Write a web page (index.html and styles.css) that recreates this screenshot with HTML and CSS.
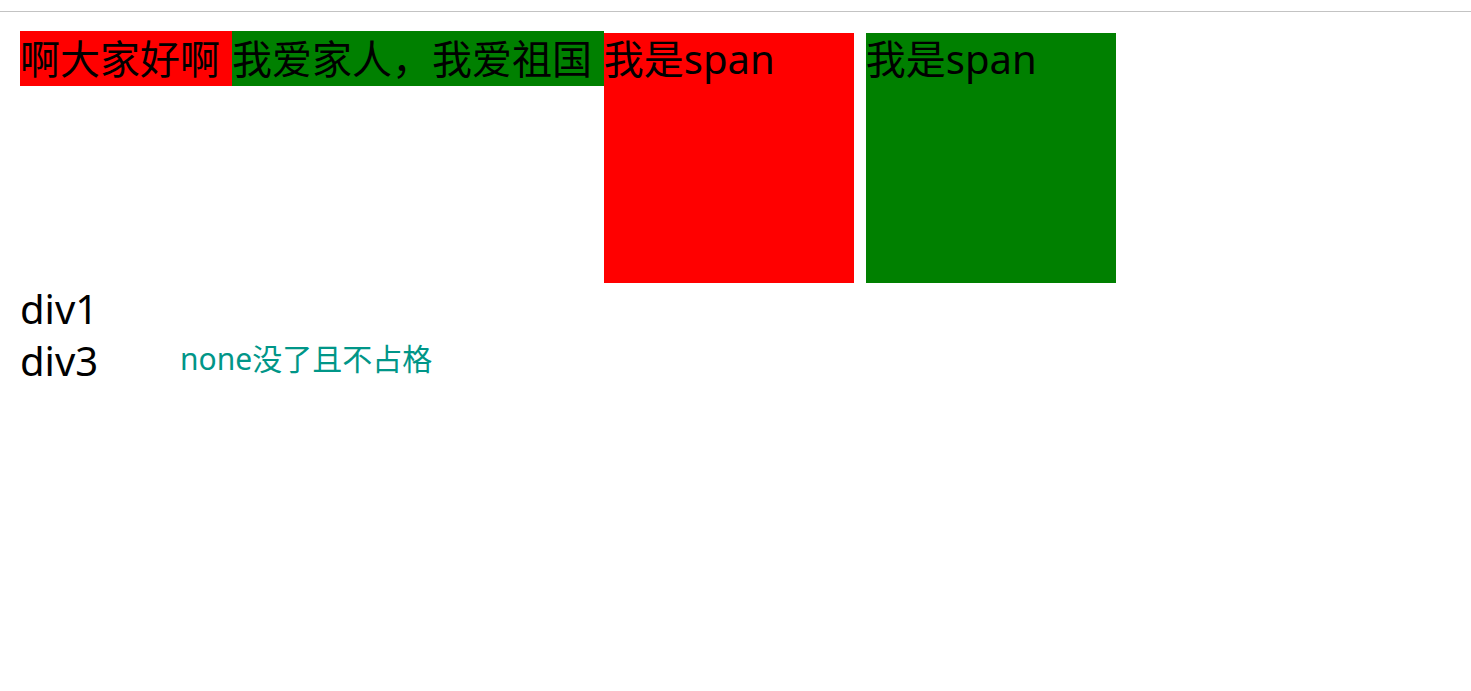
FILE: index.html
```html
<!DOCTYPE html>
<html lang="zh-CN">
<head>
<meta charset="utf-8">
<title>display</title>
<link rel="stylesheet" href="styles.css">
</head>
<body>
<div class="topbar"></div>
<main class="page">
  <p class="line"><span class="red">啊大家好啊 </span><span class="green">我爱家人，我爱祖国 </span><span class="box red">我是span</span> <span class="box green">我是span</span></p>
  <div class="div1">div1</div>
  <div class="row">
    <div class="div3">div3</div>
    <div class="note">none没了且不占格</div>
  </div>
</main>
</body>
</html>
```
FILE: styles.css
```css
html, body {
  margin: 0;
  padding: 0;
  background: #ffffff;
}
body {
  font-family: "Noto Sans", "Noto Sans CJK SC", sans-serif;
  font-size: 40px;
  line-height: 52px;
  color: #000000;
  overflow: hidden;
}
.topbar {
  height: 11px;
  border-bottom: 1px solid #c3c3c3;
}
.page {
  padding: 21px 20px 0 20px;
}
.line {
  margin: 0;
  word-spacing: 1.5px;
}
.red {
  background: #ff0000;
}
.green {
  background: #008000;
}
.box {
  display: inline-block;
  width: 250px;
  height: 250px;
  vertical-align: baseline;
  word-spacing: 0;
}
.row {
  display: flex;
  align-items: flex-start;
}
.div3 {
  width: 160px;
}
.note {
  font-size: 30px;
  line-height: normal;
  color: #009688;
}
```
